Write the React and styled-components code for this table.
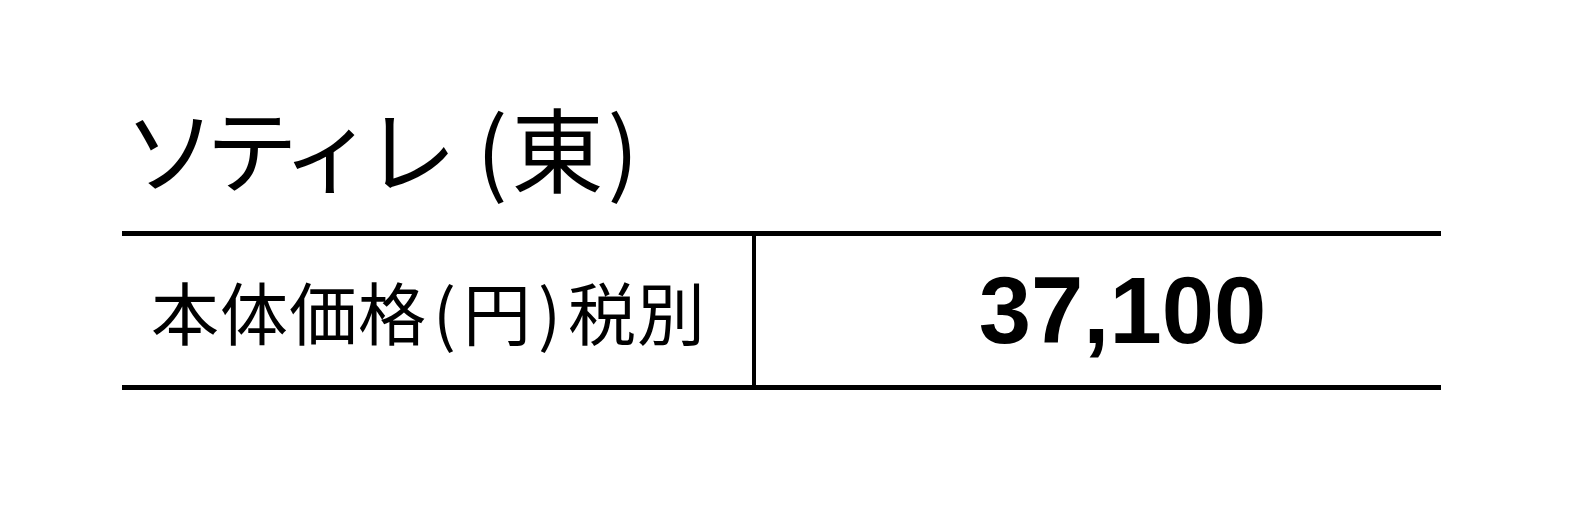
import React from "react";
import styled, { createGlobalStyle } from "styled-components";

const GlobalStyle = createGlobalStyle`
  html, body {
    margin: 0;
    padding: 0;
    background: #fff;
  }
  body {
    font-family: "Noto Sans CJK JP", "Noto Sans", sans-serif;
    color: #000;
  }
`;

const Page = styled.div`
  padding: 100px 0 0 122px;
`;

const Title = styled.h2`
  margin: 0;
  padding-left: 2px;
  font-size: 92px;
  font-weight: 400;
  letter-spacing: -10px;
  line-height: 1;
  height: 131px;
`;

const Area = styled.span`
  margin-left: 30px;
  letter-spacing: 4px;
`;

const Table = styled.div`
  display: flex;
  width: 1319px;
  border-top: 5px solid #000;
  border-bottom: 5px solid #000;
`;

const Cell = styled.div`
  height: 149px;
  display: flex;
  align-items: center;
  box-sizing: border-box;
`;

const LabelCell = styled(Cell)`
  width: 634px;
  padding-left: 29px;
  border-right: 4px solid #000;
  font-size: 68px;
  letter-spacing: 1px;
  line-height: 1;
`;

const Paren = styled.span`
  margin: 0 6px;
`;

const ValueCell = styled(Cell)`
  flex: 1;
  justify-content: center;
  padding-left: 48px;
  font-family: "Liberation Sans", Arial, sans-serif;
  font-weight: 700;
  font-size: 94px;
  line-height: 1;
`;

export default function App() {
  return (
    <>
      <GlobalStyle />
      <Page>
        <Title>
          ソティレ<Area>(東)</Area>
        </Title>
        <Table>
          <LabelCell>
            本体価格<Paren>(</Paren>円<Paren>)</Paren>税別
          </LabelCell>
          <ValueCell>37,100</ValueCell>
        </Table>
      </Page>
    </>
  );
}
